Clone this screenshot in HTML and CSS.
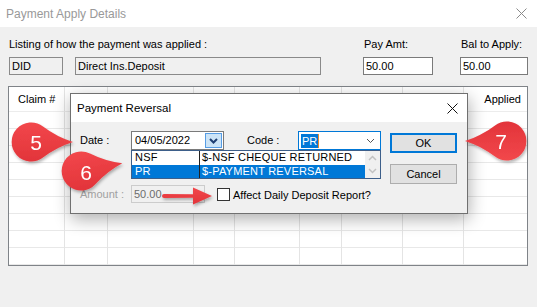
FILE: index.html
```html
<!DOCTYPE html>
<html lang="en">
<head>
<meta charset="utf-8">
<title>Payment Apply Details</title>
<link rel="stylesheet" href="styles.css">
</head>
<body>
<div class="window">
  <div class="titlebar">
    <span class="win-title">Payment Apply Details</span>
    <svg class="win-close" width="11" height="11" viewBox="0 0 11 11"><path d="M0.5 0.5 L10.5 10.5 M10.5 0.5 L0.5 10.5" stroke="#8a8a8a" stroke-width="1" fill="none"/></svg>
  </div>
  <div class="content">
    <div class="fields">
      <div class="lbl lbl-listing">Listing of how the payment was applied :</div>
      <div class="lbl lbl-pay">Pay Amt:</div>
      <div class="lbl lbl-bal">Bal to Apply:</div>
      <div class="box ro f-did">DID</div>
      <div class="box ro f-desc">Direct Ins.Deposit</div>
      <div class="box f-pay">50.00</div>
      <div class="box f-bal">50.00</div>
    </div>
    <div class="grid">
      <div class="grid-head">
        <div class="hcell first">Claim #</div>
        <div class="hcell"></div>
        <div class="hcell"></div>
        <div class="hcell"></div>
        <div class="hcell"></div>
        <div class="hcell"></div>
        <div class="hcell"></div>
        <div class="hcell"></div>
        <div class="hcell last">Applied</div>
      </div>
      <div class="grid-body">
        <div class="gcol"></div>
        <div class="gcol"></div>
        <div class="gcol"></div>
        <div class="gcol"></div>
        <div class="gcol"></div>
        <div class="gcol"></div>
        <div class="gcol"></div>
        <div class="gcol"></div>
        <div class="gcol last"></div>
      </div>
    </div>
  </div>
</div>

<div class="dialog">
  <div class="dlg-title">
    <span class="dlg-title-text">Payment Reversal</span>
    <svg class="dlg-close" width="11" height="11" viewBox="0 0 11 11"><path d="M0.5 0.5 L10.5 10.5 M10.5 0.5 L0.5 10.5" stroke="#111" stroke-width="1" fill="none"/></svg>
  </div>
  <div class="dlg-body">
    <div class="dlg-left">
      <div class="dlg-row">
        <span class="dlg-lbl">Date :</span>
        <div class="combo combo-date">
          <span class="combo-text">04/05/2022</span>
          <span class="combo-btn"><svg width="9" height="6" viewBox="0 0 9 6"><path d="M1 1 L4.5 4.5 L8 1" stroke="#1f3f73" stroke-width="2" fill="none"/></svg></span>
        </div>
        <span class="dlg-lbl code-lbl">Code :</span>
        <div class="combo combo-code">
          <span class="sel-text">PR</span><span class="caret"></span>
          <svg class="code-chev" width="9" height="6" viewBox="0 0 9 6"><path d="M1 1 L4.5 4.5 L8 1" stroke="#555" stroke-width="1" fill="none"/></svg>
        </div>
      </div>
      <div class="dlg-row row-amount">
        <span class="dlg-lbl disabled">Amount :</span>
        <div class="box amount">50.00</div>
        <span class="checkbox"></span>
        <span class="check-lbl">Affect Daily Deposit Report?</span>
      </div>
    </div>
    <div class="dlg-right">
      <div class="btn btn-default">OK</div>
      <div class="btn">Cancel</div>
    </div>
  </div>
  <div class="dropdown">
    <div class="dd-rows">
      <div class="dd-row"><span class="dd-c1">NSF</span><span class="dd-c2">$-NSF CHEQUE RETURNED</span></div>
      <div class="dd-row sel"><span class="dd-c1">PR</span><span class="dd-c2">$-PAYMENT REVERSAL</span></div>
    </div>
    <div class="dd-scroll">
      <svg width="9" height="6" viewBox="0 0 9 6"><path d="M1 5 L4.5 1.5 L8 5" stroke="#c2c2c2" stroke-width="1.5" fill="none"/></svg>
      <svg width="9" height="6" viewBox="0 0 9 6"><path d="M1 1 L4.5 4.5 L8 1" stroke="#c2c2c2" stroke-width="1.5" fill="none"/></svg>
    </div>
  </div>
</div>

<svg class="marks" width="537" height="307" viewBox="0 0 537 307">
  <defs>
    <filter id="sh" x="-30%" y="-30%" width="160%" height="160%">
      <feDropShadow dx="1" dy="2" stdDeviation="1.6" flood-color="#000" flood-opacity="0.3"/>
    </filter>
    <linearGradient id="rg" x1="0" y1="0" x2="0" y2="1">
      <stop offset="0" stop-color="#f2474b"/>
      <stop offset="1" stop-color="#e2343a"/>
    </linearGradient>
    <path id="pin" d="M42,0 Q26,-5 12,-15.5 A19.5,19.5 0 1,0 12,15.5 Q26,5 42,0 Z"/>
  </defs>
  <g filter="url(#sh)" fill="url(#rg)">
    <use href="#pin" transform="translate(31,142)"/>
    <use href="#pin" transform="translate(81,171) rotate(-10.5)"/>
    <use href="#pin" transform="translate(507,141) rotate(180)"/>
    <path d="M162,196 Q162,194 164,194 L193,194.2 L193,187.5 L212,196 L193,204.5 L193,197.8 L164,198 Q162,198 162,196 Z"/>
  </g>
  <g class="mark-num">
    <text x="36" y="149.5">5</text>
    <text x="86" y="179.5">6</text>
    <text x="501" y="148.5">7</text>
  </g>
</svg>
</body>
</html>
```

FILE: styles.css
```css
html, body {
  margin: 0;
  padding: 0;
}

body {
  width: 537px;
  height: 307px;
  overflow: hidden;
  position: relative;
  background: #f0f0f0;
  font-family: "Liberation Sans", Arial, sans-serif;
  font-size: 11px;
  color: #000;
}

.titlebar {
  height: 27px;
  background: #fff;
  display: flex;
  align-items: center;
  padding: 0 10px 0 6px;
}

.win-title {
  font-size: 12px;
  color: #999;
}

.win-close {
  margin-left: auto;
}

.content {
  padding: 10px 0 0 8px;
}

.fields {
  display: grid;
  grid-template-columns: 54px 12px 246px 42px 70px 27px 68px;
  grid-template-rows: 14px 18px;
  row-gap: 6px;
  margin-left: 1px;
}

.lbl {
  line-height: 14px;
  white-space: nowrap;
}

.lbl-listing { grid-column: 1 / 4; grid-row: 1; }
.lbl-pay { grid-column: 5; grid-row: 1; padding-left: 1px; }
.lbl-bal { grid-column: 7; grid-row: 1; padding-left: 1px; }
.f-did { grid-column: 1; grid-row: 2; }
.f-desc { grid-column: 3; grid-row: 2; }
.f-pay { grid-column: 5; grid-row: 2; }
.f-bal { grid-column: 7; grid-row: 2; }

.box {
  box-sizing: border-box;
  height: 18px;
  border: 1px solid #7a7a7a;
  background: #fff;
  padding: 0 2px;
  line-height: 16px;
  white-space: nowrap;
}

.box.ro {
  background: #f0f0f0;
  border-color: #8a8a8a;
}

.grid {
  margin-top: 11px;
  box-sizing: border-box;
  width: 520px;
  height: 180px;
  border: 1px solid #7f8388;
  background: #fff;
}

.grid-head,
.grid-body {
  display: grid;
  grid-template-columns: 56px 43px 86px 41px 65px 42px 61px 61px 63px;
}

.grid-head {
  height: 25px;
}

.hcell {
  border-right: 1px solid #e4e4e4;
  border-bottom: 1px solid #ececec;
  line-height: 24px;
  white-space: nowrap;
}

.hcell.first {
  padding-left: 9px;
}

.hcell.last {
  border-right: none;
  text-align: right;
  padding-right: 6px;
}

.grid-body {
  height: 153px;
  background: repeating-linear-gradient(to bottom, transparent 0 16px, #e8e8e8 16px 17px);
}

.gcol {
  border-right: 1px solid #e4e4e4;
}

.gcol.last {
  border-right: none;
}

/* Dialog */
.dialog {
  position: absolute;
  left: 70px;
  top: 93px;
  width: 398px;
  height: 121px;
  box-sizing: border-box;
  border: 1px solid #707070;
  background: #f0f0f0;
  box-shadow: 1px 5px 16px rgba(0, 0, 0, 0.32);
}

.dlg-title {
  height: 28px;
  background: #fff;
  display: flex;
  align-items: center;
  padding: 0 9px 0 6px;
}

.dlg-title-text {
  font-size: 11.5px;
}

.dlg-close {
  margin-left: auto;
}

.dlg-body {
  display: flex;
  padding: 9px 9px 0 9px;
}

.dlg-left {
  display: flex;
  flex-direction: column;
}

.dlg-row {
  display: flex;
  align-items: flex-start;
  height: 19px;
}

.dlg-lbl {
  width: 51px;
  line-height: 19px;
  white-space: nowrap;
}

.dlg-lbl.disabled {
  color: #a0a0a0;
  line-height: 18px;
}

.code-lbl {
  margin-left: 23px;
}

.combo {
  box-sizing: border-box;
  height: 19px;
  border: 1px solid #7a7a7a;
  background: #fff;
  display: flex;
  align-items: stretch;
  position: relative;
}

.combo-date {
  width: 93px;
}

.combo-text {
  flex: 1;
  padding-left: 3px;
  line-height: 17px;
}

.combo-btn {
  width: 17px;
  margin: 1px;
  box-sizing: border-box;
  border: 1px solid #569de5;
  background: #cce4f7;
  display: flex;
  align-items: center;
  justify-content: center;
}

.combo-code {
  width: 83px;
  height: 19px;
  border-color: #0078d7;
  align-items: center;
  padding-left: 2px;
}

.sel-text {
  background: #0078d7;
  color: #fff;
  line-height: 14px;
  padding: 0 1px;
}

.caret {
  width: 1px;
  height: 14px;
  background: #e88a2a;
}

.code-chev {
  margin-left: auto;
  margin-right: 5px;
}

.row-amount {
  margin-top: 35px;
  height: 18px;
}

.amount {
  width: 74px;
  background: #f0f0f0;
  border-color: #cccccc;
  color: #6d6d6d;
}

.checkbox {
  box-sizing: border-box;
  width: 13px;
  height: 13px;
  margin: 3px 3px 0 12px;
  border: 1px solid #333;
  background: #fff;
}

.check-lbl {
  line-height: 18px;
  padding-top: 1px;
  white-space: nowrap;
}

.dlg-right {
  margin-left: 9px;
  display: flex;
  flex-direction: column;
}

.btn {
  box-sizing: border-box;
  width: 67px;
  height: 20px;
  border: 1px solid #adadad;
  background: #e1e1e1;
  text-align: center;
  line-height: 18px;
  margin-top: 11px;
}

.btn-default {
  margin-top: 2px;
  border-color: #0078d7;
  box-shadow: inset 0 0 0 1px #0078d7;
}

/* dropdown list popup */
.dropdown {
  position: absolute;
  left: 60px;
  top: 56px;
  width: 250px;
  height: 29px;
  box-sizing: border-box;
  border: 1px solid #3d5f8a;
  background: #fff;
  display: flex;
}

.dd-rows {
  flex: 1;
  display: flex;
  flex-direction: column;
}

.dd-row {
  display: flex;
  height: 13.5px;
  line-height: 13.5px;
  white-space: nowrap;
}

.dd-c1 {
  width: 68px;
  padding-left: 3px;
  box-sizing: border-box;
  border-right: 1px solid #222;
}

.dd-c2 {
  flex: 1;
  padding-left: 2px;
  letter-spacing: 0.2px;
}

.dd-c1 {
  letter-spacing: 0.2px;
}

.dd-row.sel .dd-c1,
.dd-row.sel .dd-c2 {
  background: #0078d7;
  color: #fff;
}

.dd-scroll {
  width: 15px;
  background: #f0f0f0;
  display: flex;
  flex-direction: column;
  align-items: center;
  justify-content: space-around;
}

/* callouts */
.marks {
  position: absolute;
  left: 0;
  top: 0;
  pointer-events: none;
}

.mark-num text {
  font-family: "Liberation Sans", Arial, sans-serif;
  font-size: 21px;
  fill: #fff;
  text-anchor: middle;
}
```
